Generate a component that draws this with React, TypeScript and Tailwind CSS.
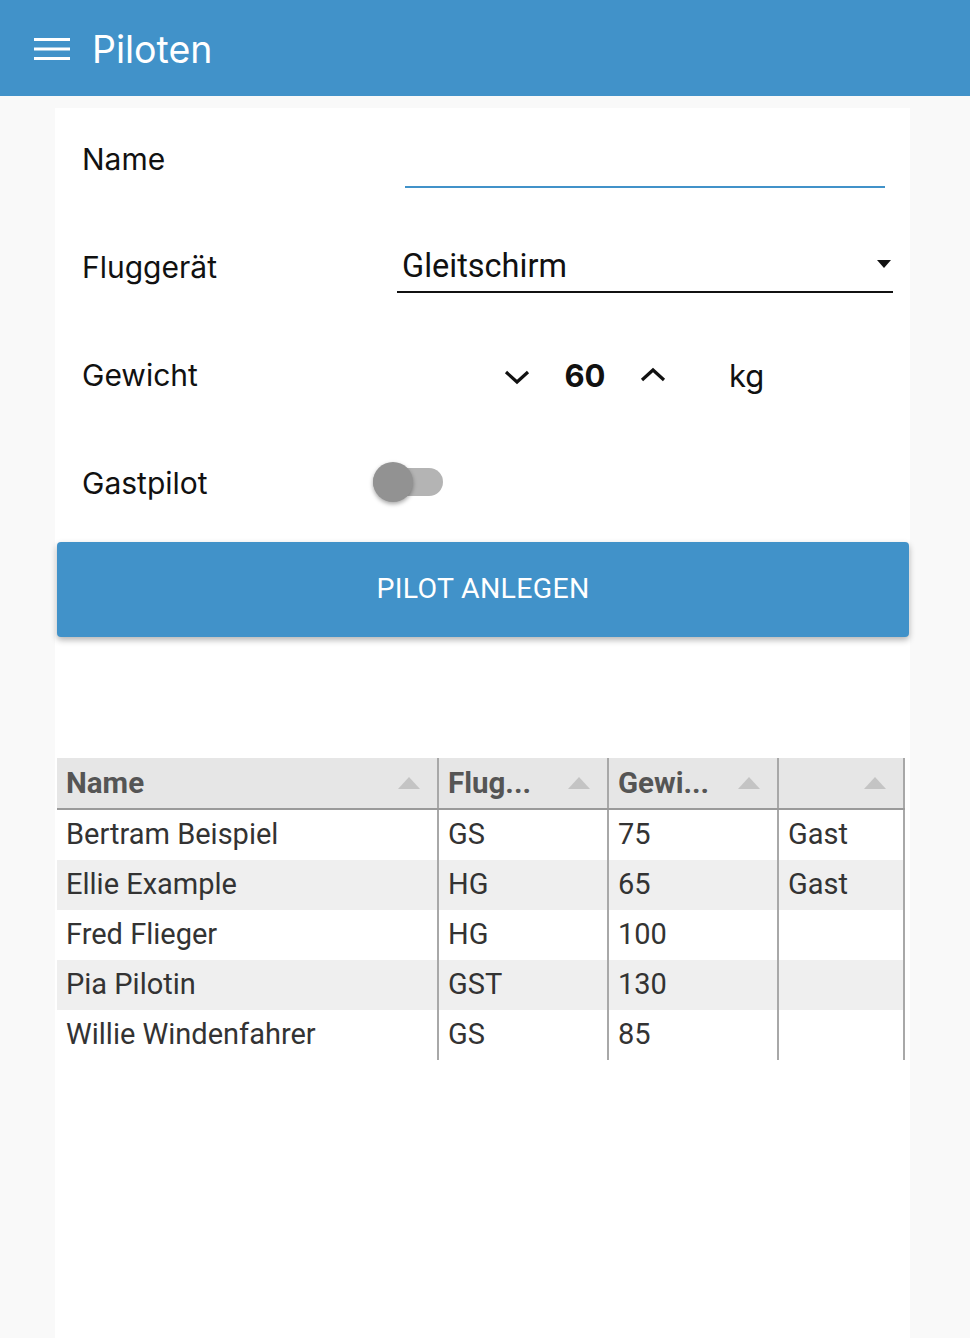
import React from "react";

const rows = [
  { name: "Bertram Beispiel", g: "GS", w: "75", gast: "Gast" },
  { name: "Ellie Example", g: "HG", w: "65", gast: "Gast" },
  { name: "Fred Flieger", g: "HG", w: "100", gast: "" },
  { name: "Pia Pilotin", g: "GST", w: "130", gast: "" },
  { name: "Willie Windenfahrer", g: "GS", w: "85", gast: "" },
];

function SortTri() {
  return (
    <svg width="22" height="12" viewBox="0 0 22 12" className="shrink-0">
      <polygon points="11,0 22,12 0,12" fill="#c4c4c4" />
    </svg>
  );
}

export default function App() {
  return (
    <div className="min-h-[1338px] bg-[#f9f9f9] flex flex-col" style={{ fontFamily: "Inter, 'Noto Sans', sans-serif" }}>
      <header className="h-[96px] bg-[#4192c9] flex items-center pl-[34px] shrink-0">
        <svg width="36" height="24" viewBox="0 0 36 24" className="mr-[22px] mt-[2px]">
          <rect x="0" y="1" width="36" height="3" fill="#fff" />
          <rect x="0" y="10.5" width="36" height="3" fill="#fff" />
          <rect x="0" y="20" width="36" height="3" fill="#fff" />
        </svg>
        <h1 className="text-white text-[37.5px] font-normal mt-[4px]">Piloten</h1>
      </header>

      <main className="flex-1 mt-[12px] ml-[55px] w-[855px] bg-white flex flex-col">
        <div className="flex items-center h-[108px] pl-[27px]">
          <div className="w-[323px] text-[30px] text-[#111] -mt-[6px]">Name</div>
          <div className="flex-1 pr-[25px] self-stretch flex items-end pb-[28px]">
            <div className="w-full h-[2px] bg-[#4192c9]" />
          </div>
        </div>

        <div className="flex items-center h-[108px] pl-[27px]">
          <div className="w-[315px] text-[30px] text-[#111] -mt-[6px]">Fluggerät</div>
          <div className="w-[496px] relative -mt-[4px]">
            <div className="border-b-2 border-[#111] h-[49px] flex items-center justify-between pl-[5px] pr-[2px] pb-[2px]" style={{ fontFamily: "Roboto, sans-serif" }}>
              <span className="text-[32.5px] text-[#111]">Gleitschirm</span>
              <svg width="14" height="8" viewBox="0 0 14 8" className="mb-[4px]">
                <polygon points="0,0 14,0 7,8" fill="#111" />
              </svg>
            </div>
          </div>
        </div>

        <div className="flex items-center h-[108px] pl-[27px]">
          <div className="w-[422px] text-[30px] text-[#111] -mt-[6px]">Gewicht</div>
          <svg width="26" height="16" viewBox="0 0 26 16" className="-mt-[2px]">
            <polyline points="2,3 13,13 24,3" fill="none" stroke="#111" strokeWidth="3.2" />
          </svg>
          <div className="w-[110px] text-center text-[31px] font-bold text-[#111] -mt-[4px]">60</div>
          <svg width="26" height="16" viewBox="0 0 26 16" className="-mt-[6px]">
            <polyline points="2,13 13,3 24,13" fill="none" stroke="#111" strokeWidth="3.2" />
          </svg>
          <div className="ml-[63px] text-[31px] text-[#111] -mt-[4px]">kg</div>
        </div>

        <div className="flex items-center h-[108px] pl-[27px]">
          <div className="w-[291px] text-[30px] text-[#111] -mt-[6px]">Gastpilot</div>
          <div className="relative w-[70px] h-[28px] rounded-full bg-[#b4b4b4] -mt-[8px]">
            <div className="absolute left-0 -top-[6px] w-[40px] h-[40px] rounded-full bg-[#929292] shadow-[0_2px_4px_rgba(0,0,0,0.35)]" />
          </div>
        </div>

        <button className="mx-[2px] mt-[2px] h-[95px] w-[852px] rounded-[4px] bg-[#4192c9] text-white text-[28.5px] tracking-[0.3px] shadow-[0_3px_6px_rgba(0,0,0,0.3)]" style={{ fontFamily: "Roboto, sans-serif" }}>
          PILOT ANLEGEN
        </button>

        <div className="mt-[121px] mx-[2px] w-[848px]" style={{ fontFamily: "Roboto, sans-serif" }}>
          <div className="flex h-[52px] bg-[#e6e6e6] border-b-2 border-[#9a9a9a] text-[29.5px] font-bold text-[#555]">
            <div className="w-[380px] flex items-center justify-between pl-[9px] pr-[17px]"><span>Name</span><SortTri /></div>
            <div className="w-[170px] flex items-center justify-between pl-[9px] pr-[17px] border-l-2 border-[#a8a8a8]"><span>Flug...</span><SortTri /></div>
            <div className="w-[170px] flex items-center justify-between pl-[9px] pr-[17px] border-l-2 border-[#a8a8a8]"><span>Gewi...</span><SortTri /></div>
            <div className="w-[128px] flex items-center justify-end pr-[17px] border-x-2 border-[#a8a8a8]"><SortTri /></div>
          </div>
          {rows.map((r, i) => (
            <div key={r.name} className={`flex h-[50px] text-[29px] text-[#333] ${i % 2 === 1 ? "bg-[#efefef]" : "bg-white"}`}>
              <div className="w-[380px] flex items-center pl-[9px]">{r.name}</div>
              <div className="w-[170px] flex items-center pl-[9px] border-l-2 border-[#a8a8a8]">{r.g}</div>
              <div className="w-[170px] flex items-center pl-[9px] border-l-2 border-[#a8a8a8]">{r.w}</div>
              <div className="w-[128px] flex items-center pl-[9px] border-x-2 border-[#a8a8a8]">{r.gast}</div>
            </div>
          ))}
        </div>
      </main>
    </div>
  );
}
